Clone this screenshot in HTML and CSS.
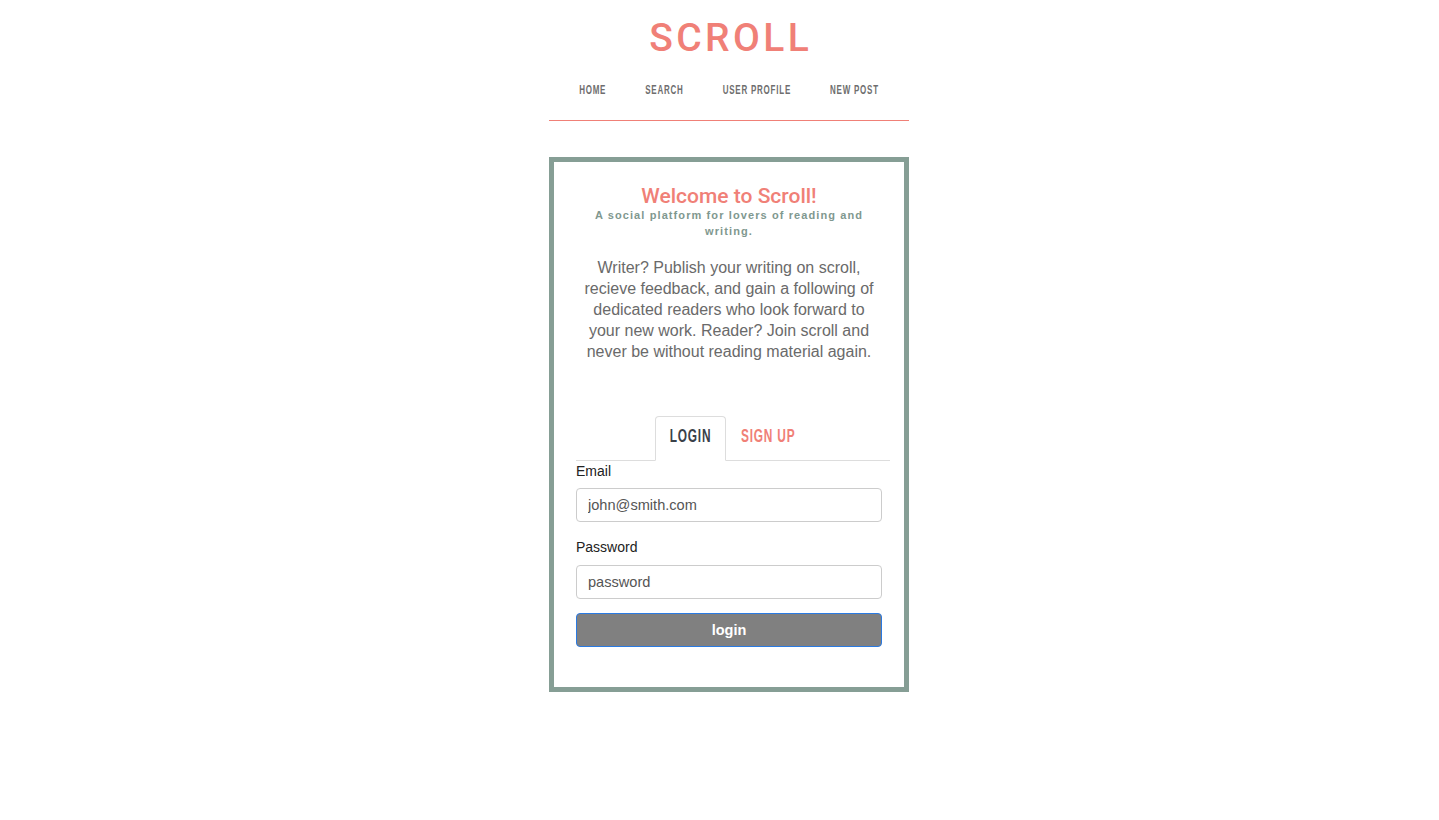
FILE: index.html
```html
<!DOCTYPE html>
<html lang="en">
<head>
<meta charset="utf-8">
<title>Scroll</title>
<link rel="stylesheet" href="styles.css">
</head>
<body>
<div class="page">
  <header class="site-header">
    <h1 class="logo">SCROLL</h1>
    <nav class="main-nav">
      <a href="#">HOME</a>
      <a href="#">SEARCH</a>
      <a href="#">USER PROFILE</a>
      <a href="#">NEW POST</a>
    </nav>
    <div class="header-rule"></div>
  </header>

  <main class="card">
    <h2 class="welcome">Welcome to Scroll!</h2>
    <p class="tagline">A social platform for lovers of reading and writing.</p>
    <p class="intro">Writer? Publish your writing on scroll, recieve feedback, and gain a following of dedicated readers who look forward to your new work. Reader? Join scroll and never be without reading material again.</p>

    <div class="tabs">
      <a href="#" class="tab tab-login active"><span>LOGIN</span></a>
      <a href="#" class="tab tab-signup"><span>SIGN UP</span></a>
    </div>

    <form class="login-form">
      <label for="email">Email</label>
      <input id="email" type="text" placeholder="john@smith.com">
      <label for="password">Password</label>
      <input id="password" type="password" placeholder="password">
      <button type="button" class="btn">login</button>
    </form>
  </main>
</div>
</body>
</html>
```

FILE: styles.css
```css
* { box-sizing: border-box; }

body {
  margin: 0;
  padding-left: 19px;
  background: #fff;
  font-family: "Liberation Sans", Arial, sans-serif;
  color: #222;
}

.page {
  width: 360px;
  margin: 0 auto;
}

.site-header {
  text-align: center;
}

.logo {
  margin: 0;
  padding-top: 18px;
  padding-left: 3.4px;
  font-family: Roboto, "Liberation Sans", sans-serif;
  font-weight: 500;
  font-size: 39px;
  line-height: 40px;
  letter-spacing: 3.4px;
  color: #f08077;
}

.main-nav {
  display: flex;
  justify-content: center;
  gap: 61px;
  padding: 24px 0 22px;
  transform: scaleX(0.64);
}

.main-nav a {
  flex-shrink: 0;
  white-space: nowrap;
  font-family: "Liberation Sans", Arial, sans-serif;
  font-weight: bold;
  font-size: 12.5px;
  line-height: 16px;
  letter-spacing: 1.2px;
  color: #6e6e6e;
  text-decoration: none;
}

.header-rule {
  height: 1px;
  background: #f08077;
}

.card {
  margin-top: 36px;
  border: 5px solid #869e95;
  padding: 23px 22px 22px;
  text-align: center;
}

.welcome {
  margin: 0;
  font-family: Roboto, "Liberation Sans", sans-serif;
  font-weight: 500;
  font-size: 21px;
  line-height: 22px;
  color: #f08077;
}

.tagline {
  width: 290px;
  margin: 0 auto;
  font-size: 11px;
  font-weight: bold;
  line-height: 16px;
  letter-spacing: 1.1px;
  color: #7f988f;
}

.intro {
  width: 296px;
  margin: 18px auto 0;
  font-size: 16px;
  line-height: 21px;
  color: #6a6a6a;
}

.tabs {
  display: flex;
  justify-content: center;
  margin: 54px -8px 0 0;
  border-bottom: 1px solid #ddd;
}

.tab {
  display: flex;
  justify-content: center;
  height: 44px;
  padding-top: 8px;
  margin-bottom: -1px;
  border: 1px solid transparent;
  border-radius: 4px 4px 0 0;
  text-decoration: none;
  color: #f08077;
}

.tab span {
  display: inline-block;
  font-family: "Liberation Sans", Arial, sans-serif;
  font-weight: bold;
  font-size: 18px;
  line-height: 22px;
  letter-spacing: 1.2px;
  white-space: nowrap;
  transform: scaleX(0.66);
}

.tab-login { width: 71px; }
.tab-signup { width: 86px; }

.tab.active {
  color: #3a4149;
  background: #fff;
  border-color: #ddd #ddd #fff;
  height: 45px;
}

.login-form {
  display: flex;
  flex-direction: column;
  text-align: left;
}

.login-form label {
  font-size: 14px;
  line-height: 20px;
  margin-bottom: 7px;
  color: #222;
}

.login-form label + input + label {
  margin-top: 15px;
  margin-bottom: 8px;
}

.login-form input {
  height: 34px;
  padding: 6px 11px;
  border: 1px solid #ccc;
  border-radius: 4px;
  font-family: "Liberation Sans", Arial, sans-serif;
  font-size: 14.6px;
  color: #555;
}

.login-form input::placeholder { color: #555; }

.btn {
  margin-top: 14px;
  margin-bottom: 18px;
  height: 34px;
  border: 1px solid #2a7ae2;
  border-radius: 4px;
  background: #808080;
  color: #fff;
  font-family: "Liberation Sans", Arial, sans-serif;
  font-weight: bold;
  font-size: 14.5px;
}
```
